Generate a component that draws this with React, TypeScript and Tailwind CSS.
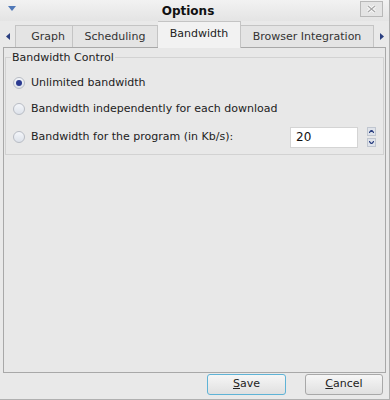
import React from "react";

const Radio = ({ checked }: { checked?: boolean }) => (
  <span className="w-[12px] h-[12px] rounded-full border border-[#b8bcc4] bg-gradient-to-b from-[#f4f6fa] to-[#dde2ea] flex items-center justify-center shrink-0">
    {checked && <span className="w-[6px] h-[6px] rounded-full bg-[#2a3a90]" />}
  </span>
);

export default function App() {
  return (
    <div
      className="w-[390px] h-[400px] bg-[#e9e9e9] flex flex-col text-[11px] text-[#222] overflow-hidden border-r border-b border-[#b0b0b0]"
      style={{ fontFamily: '"DejaVu Sans", sans-serif' }}
    >
      {/* Title bar */}
      <div className="h-[21px] shrink-0 flex items-center bg-gradient-to-b from-[#f2f2f2] to-[#e4e4e4] px-[8px] relative">
        <svg width="8" height="6" viewBox="0 0 8 6" className="mt-[-3px]">
          <path d="M0 0 L8 0 L4 5 Z" fill="#4f78b8" />
        </svg>
        <div className="flex-1 text-center font-bold text-[12px] text-[#111]">Options</div>
        <div className="w-[23px] h-[16px] border border-[#b8b8b8] bg-[#e4e4e4] flex items-center justify-center mt-[-4px] mr-[-2px]">
          <svg width="9" height="8" viewBox="0 0 9 8">
            <path d="M1 1 L8 7 M8 1 L1 7" stroke="#fafafa" strokeWidth="3" />
            <path d="M1 1 L8 7 M8 1 L1 7" stroke="#a8a8a8" strokeWidth="1.2" />
          </svg>
        </div>
      </div>

      {/* Tabs row */}
      <div className="h-[26px] shrink-0 flex items-end relative z-10 text-[#333]">
        <div className="w-[15px] h-[22px] flex items-center justify-center">
          <svg width="4" height="7" viewBox="0 0 4 7"><path d="M4 0 L0 3.5 L4 7 Z" fill="#2a3f80" /></svg>
        </div>
        <div className="w-[58px] h-[22px] border border-[#c4c4c4] border-b-0 bg-[#e4e4e4] flex items-center justify-center pl-[8px] pt-[2px]">Graph</div>
        <div className="w-[85px] h-[22px] border border-[#c4c4c4] border-l-0 border-b-0 bg-[#e4e4e4] flex items-center justify-center pt-[2px]">Scheduling</div>
        <div className="w-[83px] h-[27px] border border-[#c4c4c4] border-l-0 border-b-0 bg-[#f2f2f2] flex items-center justify-center pb-[1px] mb-[-1px] text-[#222]">Bandwidth</div>
        <div className="w-[133px] h-[22px] border border-[#c4c4c4] border-l-0 border-b-0 bg-[#e4e4e4] flex items-center justify-center pt-[2px]">Browser Integration</div>
        <div className="flex-1 h-[22px] flex items-center justify-center">
          <svg width="4" height="7" viewBox="0 0 4 7"><path d="M0 0 L4 3.5 L0 7 Z" fill="#2a3f80" /></svg>
        </div>
      </div>

      {/* Panel */}
      <div className="mx-[3px] h-[326px] shrink-0 border border-[#a8a8a8] bg-[#e8e8e8] px-[1px] pt-[2px]">
        <div className="relative mt-[7px] h-[98px] border border-[#d2d2d2] pt-[13px] pl-[7px]">
          <span className="absolute left-[5px] top-[-8px] bg-[#e8e8e8] px-[1px] text-[#222]">Bandwidth Control</span>
          <div className="flex items-center gap-[6px] h-[24px]">
            <Radio checked />
            <span>Unlimited bandwidth</span>
          </div>
          <div className="flex items-center gap-[6px] h-[28px]">
            <Radio />
            <span>Bandwidth independently for each download</span>
          </div>
          <div className="flex items-center gap-[6px] h-[28px]">
            <Radio />
            <span className="flex-1">Bandwidth for the program (in Kb/s):</span>
            <div className="w-[68px] h-[21px] bg-white border border-[#d4d4d4] flex items-center pl-[5px] text-[12px] text-[#111]">20</div>
            <div className="flex flex-col gap-[2px] ml-[3px] mr-[7px]">
              <div className="w-[9px] h-[9px] bg-[#dfe3ea] border border-[#c0c6d0] flex items-center justify-center">
                <svg width="5" height="3" viewBox="0 0 5 3"><path d="M0 3 L2.5 0 L5 3" stroke="#2a3f80" fill="none" strokeWidth="1.2" /></svg>
              </div>
              <div className="w-[9px] h-[9px] bg-[#dfe3ea] border border-[#c0c6d0] flex items-center justify-center">
                <svg width="5" height="3" viewBox="0 0 5 3"><path d="M0 0 L2.5 3 L5 0" stroke="#2a3f80" fill="none" strokeWidth="1.2" /></svg>
              </div>
            </div>
          </div>
        </div>
      </div>

      {/* Buttons */}
      <div className="flex justify-end gap-[19px] pr-[6px] pt-[1px]">
        <button className="w-[79px] h-[21px] rounded-[3px] border border-[#5fb3d6] bg-gradient-to-b from-[#f6f6f6] to-[#e0e0e0] text-[#222] text-[11px] flex items-center justify-center">
          <span><span className="underline">S</span>ave</span>
        </button>
        <button className="w-[78px] h-[21px] rounded-[3px] border border-[#a8a8a8] bg-gradient-to-b from-[#f6f6f6] to-[#e0e0e0] text-[#222] text-[11px] flex items-center justify-center">
          <span><span className="underline">C</span>ancel</span>
        </button>
      </div>
    </div>
  );
}
